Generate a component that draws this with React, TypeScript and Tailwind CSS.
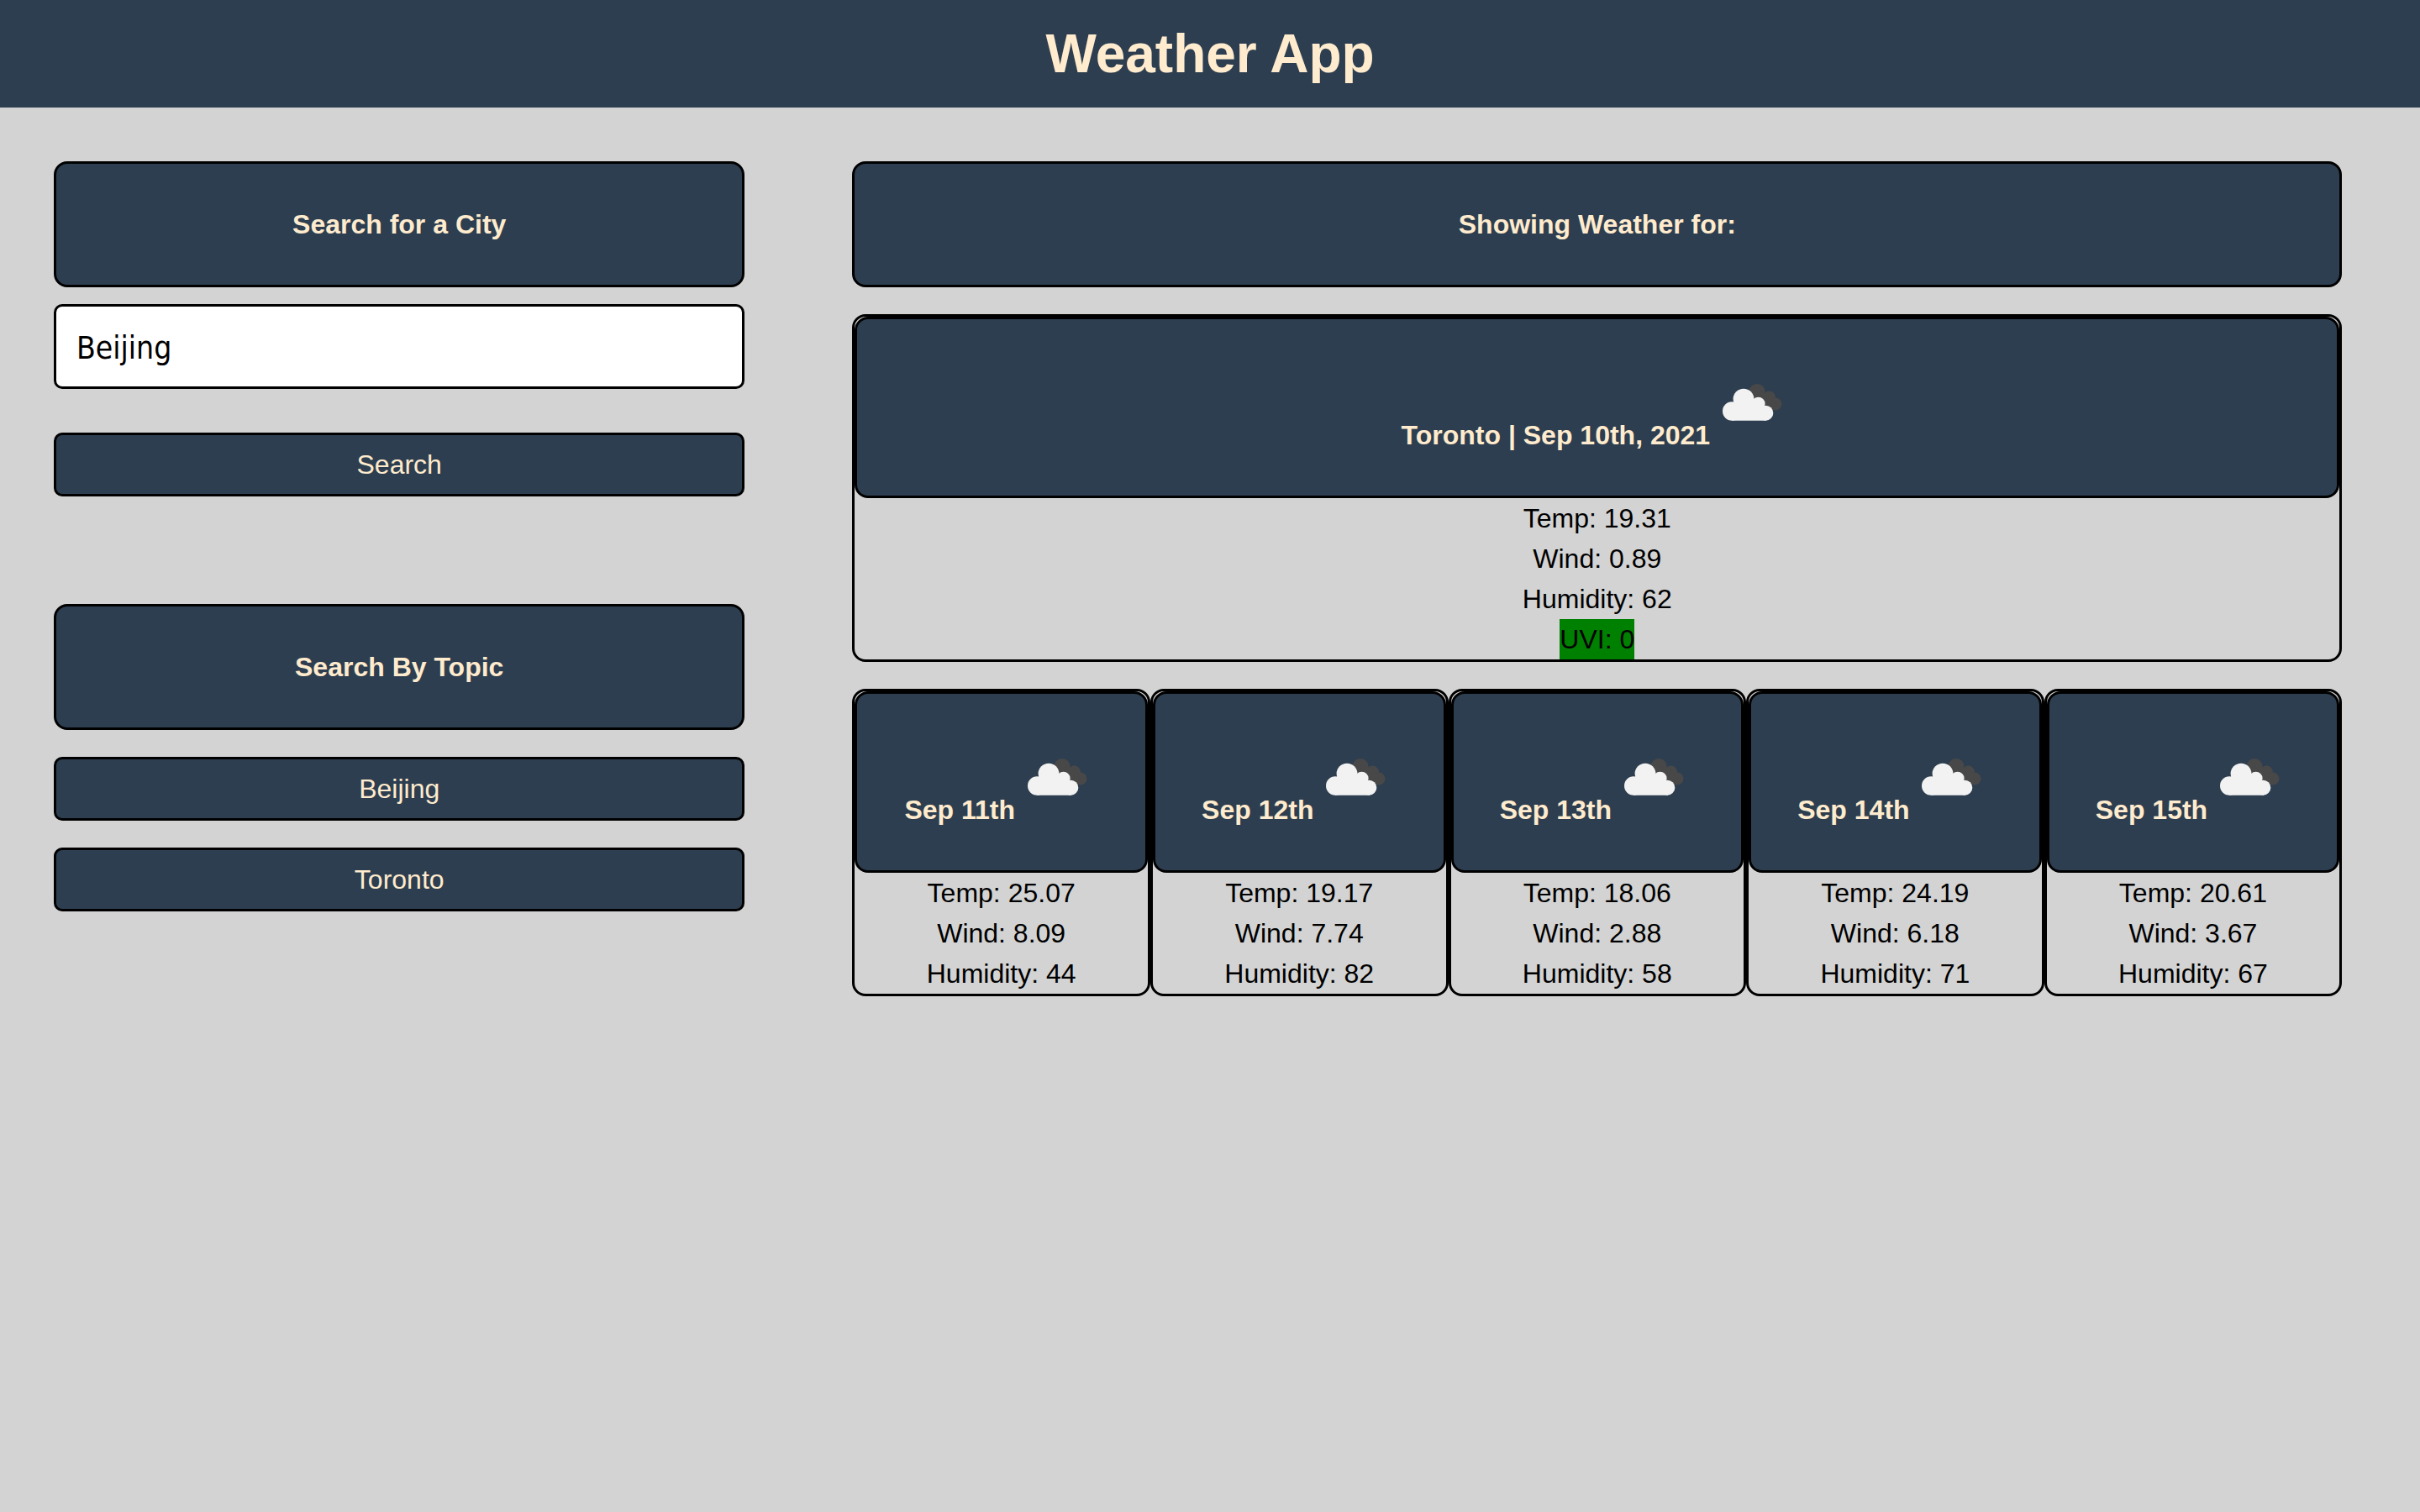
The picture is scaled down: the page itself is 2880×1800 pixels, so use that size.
import React from "react";

const forecast = [
  { date: "Sep 11th", temp: "25.07", wind: "8.09", humidity: "44" },
  { date: "Sep 12th", temp: "19.17", wind: "7.74", humidity: "82" },
  { date: "Sep 13th", temp: "18.06", wind: "2.88", humidity: "58" },
  { date: "Sep 14th", temp: "24.19", wind: "6.18", humidity: "71" },
  { date: "Sep 15th", temp: "20.61", wind: "3.67", humidity: "67" },
];

const panel = "border-3 border-black rounded-2xl bg-[#2d3e50] text-[#ffebcd] font-bold text-center p-12";
const button =
  "block w-full border-3 border-black rounded-[10px] bg-[#2d3e50] text-[#ffebcd] text-center h-[76px] cursor-pointer";

function Clouds() {
  return (
    <svg role="img" aria-label="broken clouds" className="inline-block align-baseline w-[90px] h-[101px]" viewBox="0 0 90 101">
      <g fill="#484849">
        <circle cx="47" cy="38.5" r="9.5" />
        <circle cx="61.5" cy="45" r="7.5" />
        <circle cx="69" cy="53" r="7.5" />
        <path d="M47 38 L61 40 L72 59 L60 60 Z" />
      </g>
      <g fill="#f2f2f2">
        <circle cx="17.2" cy="61.5" r="11.2" />
        <circle cx="31" cy="47.1" r="12.4" />
        <circle cx="48.6" cy="52.7" r="8" />
        <circle cx="57.3" cy="63.7" r="9" />
        <path d="M17 53 L20 50 L40 48 L56 56 L58 72.7 H17 Z" />
      </g>
    </svg>
  );
}

export default function App() {
  return (
    <div className="min-h-screen bg-[#d3d3d3] text-black text-[32px] leading-[48px] font-['Liberation_Sans',Arial,sans-serif]">
      <header className="bg-[#2d3e50] py-4 text-center">
        <h1 className="text-[64px] leading-[96px] font-bold text-[#ffebcd]">Weather App</h1>
      </header>
      <div className="flex items-start">
        <aside className="w-[33%] p-16">
          <form onSubmit={(e) => e.preventDefault()}>
            <h2 className={panel}>
              <label htmlFor="city">Search for a City</label>
            </h2>
            <input
              id="city"
              type="text"
              defaultValue="Beijing"
              className="mt-5 block w-full h-[101px] border-3 border-black rounded-[10px] bg-white px-6 pt-1 text-[37px] font-['DejaVu_Sans_Condensed','DejaVu_Sans',sans-serif]"
            />
            <button type="submit" className={button + " mt-[52px]"}>
              Search
            </button>
          </form>
          <h2 className={panel + " mt-32"}>Search By Topic</h2>
          <button type="button" className={button + " mt-8"}>
            Beijing
          </button>
          <button type="button" className={button + " mt-8"}>
            Toronto
          </button>
        </aside>
        <main className="w-[66%] p-16">
          <h2 className={panel}>Showing Weather for:</h2>
          <section className="mt-8 border-3 border-black rounded-2xl text-center">
            <h3 className={panel}>
              Toronto | Sep 10th, 2021 <Clouds />
            </h3>
            <p>Temp: 19.31</p>
            <p>Wind: 0.89</p>
            <p>Humidity: 62</p>
            <p className="mx-auto w-fit bg-[#008000]">UVI: 0</p>
          </section>
          <section className="mt-8 grid grid-cols-5">
            {forecast.map((day) => (
              <article key={day.date} className="border-3 border-black rounded-2xl text-center">
                <h3 className={panel}>
                  {day.date} <Clouds />
                </h3>
                <p>Temp: {day.temp}</p>
                <p>Wind: {day.wind}</p>
                <p>Humidity: {day.humidity}</p>
              </article>
            ))}
          </section>
        </main>
      </div>
    </div>
  );
}
